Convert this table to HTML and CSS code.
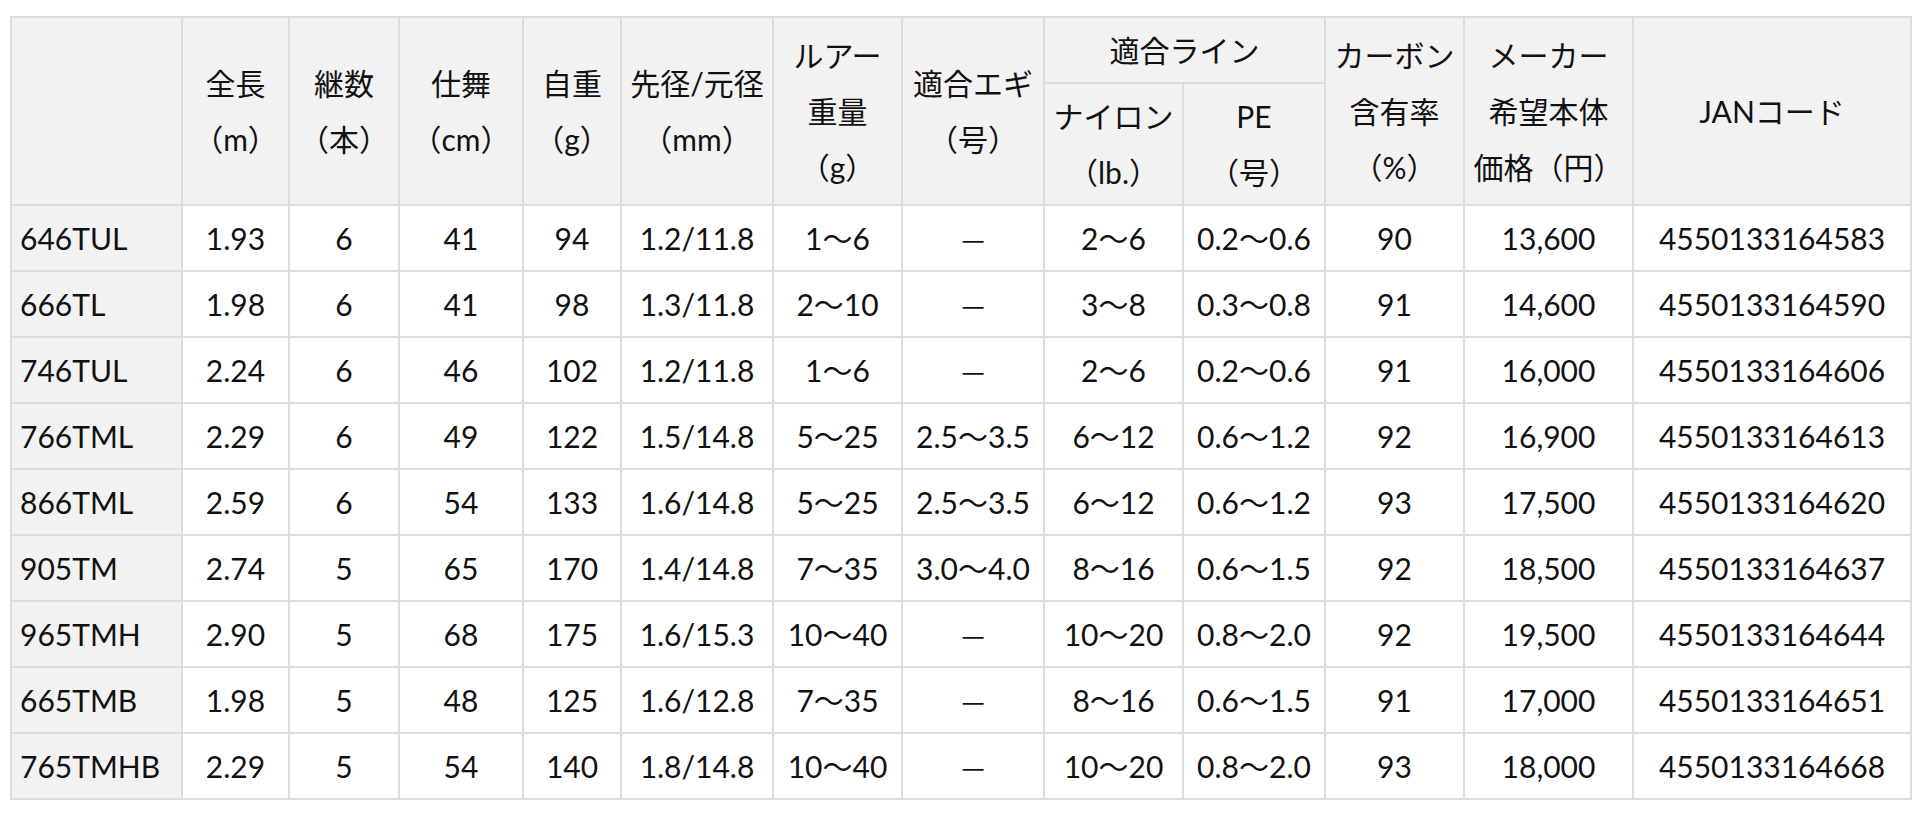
FILE: index.html
```html
<!DOCTYPE html>
<html lang="ja">
<head>
<meta charset="utf-8">
<title>スペック表</title>
<link rel="stylesheet" href="styles.css">
</head>
<body>
<table class="spec">
  <colgroup>
    <col class="c-name"><col class="c-len"><col class="c-pcs"><col class="c-close"><col class="c-wt"><col class="c-dia"><col class="c-lure"><col class="c-egi"><col class="c-ny"><col class="c-pe"><col class="c-carbon"><col class="c-price"><col class="c-jan">
  </colgroup>
  <thead>
    <tr>
      <th rowspan="2"></th>
      <th rowspan="2">全長<br>（m）</th>
      <th rowspan="2">継数<br>（本）</th>
      <th rowspan="2">仕舞<br>（cm）</th>
      <th rowspan="2">自重<br>（g）</th>
      <th rowspan="2">先径/元径<br>（mm）</th>
      <th rowspan="2">ルアー<br>重量<br>（g）</th>
      <th rowspan="2">適合エギ<br>（号）</th>
      <th colspan="2">適合ライン</th>
      <th rowspan="2">カーボン<br>含有率<br>（%）</th>
      <th rowspan="2">メーカー<br>希望本体<br>価格（円）</th>
      <th rowspan="2">JANコード</th>
    </tr>
    <tr>
      <th>ナイロン<br>（lb.）</th>
      <th>PE<br>（号）</th>
    </tr>
  </thead>
  <tbody>
    <tr><th>646TUL</th><td>1.93</td><td>6</td><td>41</td><td>94</td><td>1.2/11.8</td><td>1〜6</td><td class="dash">—</td><td>2〜6</td><td>0.2〜0.6</td><td>90</td><td>13,600</td><td>4550133164583</td></tr>
    <tr><th>666TL</th><td>1.98</td><td>6</td><td>41</td><td>98</td><td>1.3/11.8</td><td>2〜10</td><td class="dash">—</td><td>3〜8</td><td>0.3〜0.8</td><td>91</td><td>14,600</td><td>4550133164590</td></tr>
    <tr><th>746TUL</th><td>2.24</td><td>6</td><td>46</td><td>102</td><td>1.2/11.8</td><td>1〜6</td><td class="dash">—</td><td>2〜6</td><td>0.2〜0.6</td><td>91</td><td>16,000</td><td>4550133164606</td></tr>
    <tr><th>766TML</th><td>2.29</td><td>6</td><td>49</td><td>122</td><td>1.5/14.8</td><td>5〜25</td><td>2.5〜3.5</td><td>6〜12</td><td>0.6〜1.2</td><td>92</td><td>16,900</td><td>4550133164613</td></tr>
    <tr><th>866TML</th><td>2.59</td><td>6</td><td>54</td><td>133</td><td>1.6/14.8</td><td>5〜25</td><td>2.5〜3.5</td><td>6〜12</td><td>0.6〜1.2</td><td>93</td><td>17,500</td><td>4550133164620</td></tr>
    <tr><th>905TM</th><td>2.74</td><td>5</td><td>65</td><td>170</td><td>1.4/14.8</td><td>7〜35</td><td>3.0〜4.0</td><td>8〜16</td><td>0.6〜1.5</td><td>92</td><td>18,500</td><td>4550133164637</td></tr>
    <tr><th>965TMH</th><td>2.90</td><td>5</td><td>68</td><td>175</td><td>1.6/15.3</td><td>10〜40</td><td class="dash">—</td><td>10〜20</td><td>0.8〜2.0</td><td>92</td><td>19,500</td><td>4550133164644</td></tr>
    <tr><th>665TMB</th><td>1.98</td><td>5</td><td>48</td><td>125</td><td>1.6/12.8</td><td>7〜35</td><td class="dash">—</td><td>8〜16</td><td>0.6〜1.5</td><td>91</td><td>17,000</td><td>4550133164651</td></tr>
    <tr><th>765TMHB</th><td>2.29</td><td>5</td><td>54</td><td>140</td><td>1.8/14.8</td><td>10〜40</td><td class="dash">—</td><td>10〜20</td><td>0.8〜2.0</td><td>93</td><td>18,000</td><td>4550133164668</td></tr>
  </tbody>
</table>
</body>
</html>
```

FILE: styles.css
```css
html, body {
  background: #ffffff;
}

body {
  margin: 16px 0 0 10px;
  font-family: "Lato", "Noto Sans CJK JP", sans-serif;
  font-size: 30px;
  color: #111111;
}

.spec {
  border-collapse: collapse;
  table-layout: fixed;
  width: 1900px;
}

.spec th,
.spec td {
  border: 2px solid #dcdcdc;
  padding: 4px 8px;
  line-height: 56px;
  text-align: center;
  vertical-align: middle;
  font-weight: normal;
  white-space: nowrap;
}

.spec thead th {
  background: #f2f2f2;
}

.spec tbody th {
  background: #f2f2f2;
  text-align: left;
}

.spec tbody td {
  background: #ffffff;
}

.spec tbody td.dash {
  font-family: "Noto Sans CJK JP", sans-serif;
  font-size: 26px;
}

.c-name { width: 171px; }
.c-len { width: 107px; }
.c-pcs { width: 110px; }
.c-close { width: 124px; }
.c-wt { width: 98px; }
.c-dia { width: 152px; }
.c-lure { width: 129px; }
.c-egi { width: 142px; }
.c-ny { width: 139px; }
.c-pe { width: 142px; }
.c-carbon { width: 139px; }
.c-price { width: 169px; }
.c-jan { width: 278px; }
```
